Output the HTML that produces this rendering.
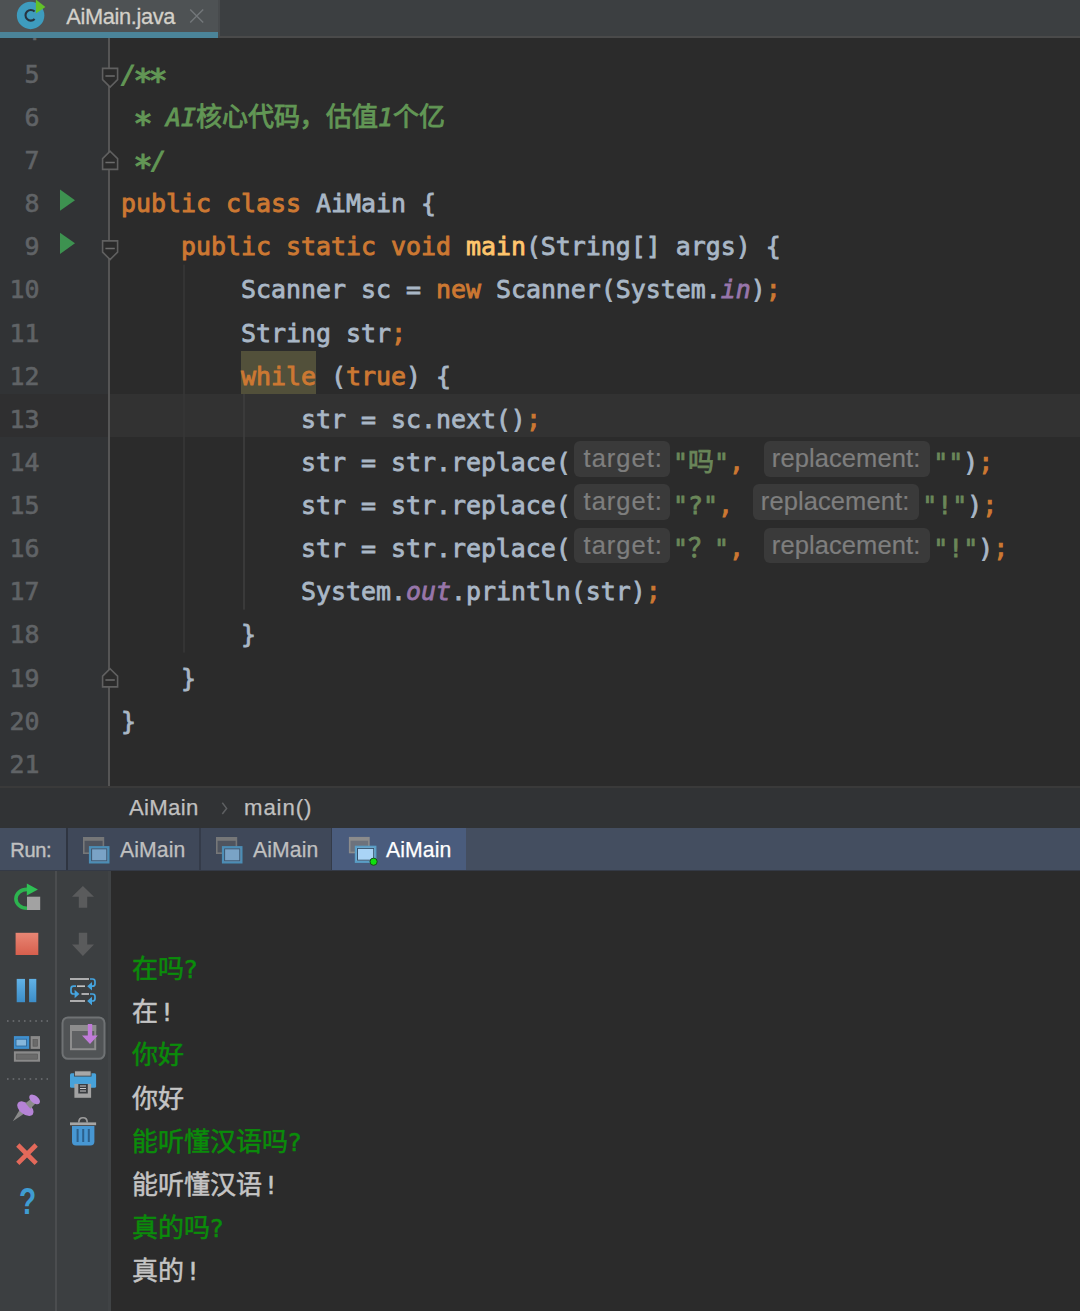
<!DOCTYPE html>
<html lang="zh">
<head>
<meta charset="utf-8">
<title>AiMain.java</title>
<style>
*{box-sizing:border-box;margin:0;padding:0}
html,body{width:1080px;height:1311px;overflow:hidden;background:#2b2b2b}
body{position:relative;font-family:"Liberation Sans","Noto Sans CJK SC",sans-serif;color:#bbbbbb}
.abs{position:absolute}
svg{position:absolute;overflow:visible}
/* tab bar */
#tabbar{left:0;top:0;width:1080px;height:38px;background:#3c3f41;border-bottom:2px solid #4a4a4a}
#tab{left:0;top:0;width:218px;height:38px;background:#4e5254;border-bottom:6px solid #4b8499}
#tabsep{left:218px;top:0;width:2px;height:36px;background:#484b4d}
#tabtitle{left:66.3px;top:2.5px;font-size:21.8px;letter-spacing:-.35px;line-height:28px;color:#d3d0c9;white-space:nowrap;-webkit-text-stroke:.3px}
/* editor */
#gutter{left:0;top:38px;width:109px;height:748px;background:#313335}
#gline{left:108px;top:38px;width:2px;height:748px;background:#555555}
#curline{left:110px;top:394px;width:970px;height:43px;background:#323232}
#curgut{left:0;top:394px;width:108.5px;height:43px;background:#2f2f30}
.ln{position:absolute;left:0;width:39.5px;text-align:right;height:43.125px;line-height:43.125px;
 font-family:"DejaVu Sans Mono","Liberation Mono",monospace;font-size:24.915px;color:#606366;white-space:pre;-webkit-text-stroke:.6px}
.cl{position:absolute;left:121px;height:43.125px;line-height:43.125px;white-space:pre;
 font-family:"DejaVu Sans Mono","Noto Sans CJK SC","Liberation Mono",monospace;font-size:24.915px;color:#a9b7c6;-webkit-text-stroke:.8px}
.k{color:#cc7832;-webkit-text-stroke:.9px}.d{color:#629755;font-style:italic;-webkit-text-stroke:.9px}
.ast{display:inline-block;width:15px;font-style:normal;transform:translate(-.5px,5.2px) scale(1.3);transform-origin:50% 50%}.s{color:#6a8759}.m{color:#ffc66d}.f{color:#9876aa;font-style:italic}
.cj{font-family:"Noto Sans CJK SC",sans-serif;font-style:normal;font-size:26px;line-height:0}

.h{display:inline-block;vertical-align:top;height:35.5px;margin-top:.4px;line-height:35.5px;border-radius:6px;background:#3a3a3a;color:#7e7e7e;
 font-family:"Liberation Sans",sans-serif;font-size:25.5px;-webkit-text-stroke:.2px;text-align:left;overflow:hidden}
.h1{width:96.1px;margin-left:3.4px;margin-right:2.7px;padding-left:9.3px;letter-spacing:1px}
.h2{width:165.6px;margin-left:5.2px;margin-right:3.5px;padding-left:7.6px;letter-spacing:.09px}
.guide{position:absolute;width:1.5px;background:#393939}
/* breadcrumbs */
#crumbs{left:0;top:786px;width:1080px;height:42px;background:#313335;border-top:2px solid #3a3a3a}
.cr{position:absolute;top:793.4px;font-size:22.2px;letter-spacing:.55px;line-height:30px;color:#c0c0c0;white-space:nowrap;-webkit-text-stroke:.25px}
/* run bar */
#runbar{left:0;top:828px;width:1080px;height:43px;background:#444e60;border-bottom:1px solid #343a46}
.rt{position:absolute;top:828px;height:42px}
.rtxt{position:absolute;top:835.4px;font-size:21.2px;letter-spacing:.1px;line-height:30px;color:#c0c0c0;white-space:nowrap;-webkit-text-stroke:.25px}
/* console */
#tb1{left:0;top:871px;width:55px;height:440px;background:#3c3f41}
#tbsep{left:55px;top:871px;width:2px;height:440px;background:#4b4d4f}
#tb2{left:57px;top:871px;width:53px;height:440px;background:#3c3f41}
.co{position:absolute;left:132px;-webkit-text-stroke:.5px;height:43.125px;line-height:43.125px;white-space:pre;
 font-family:"DejaVu Sans Mono","Noto Sans CJK SC",monospace;font-size:24.915px;color:#c4c4c4}
.co .cj{font-size:26px}
.in{color:#0a8c0a}
.ex{position:relative;left:1.5px}
.qu{position:relative;left:-1px}
.cm{position:relative;left:-.5px}
</style>
</head>
<body>
<div id="tabbar" class="abs"></div>
<div id="tab" class="abs"></div>
<div id="tabsep" class="abs"></div>
<div id="tabtitle" class="abs">AiMain.java</div>
<div id="gutter" class="abs"></div>
<div id="curline" class="abs"></div>
<div id="curgut" class="abs"></div>
<div id="gline" class="abs"></div>
<div class="abs" style="left:241px;top:351px;width:75px;height:43px;background:#52503a"></div>
<div class="abs" style="left:0;top:38px;width:100px;height:10px;overflow:hidden"><div class="ln" style="top:-28.375px">4</div></div>
<div class="ln" style="top:52.750px">5</div>
<div class="ln" style="top:95.875px">6</div>
<div class="ln" style="top:139.000px">7</div>
<div class="ln" style="top:182.125px">8</div>
<div class="ln" style="top:225.250px">9</div>
<div class="ln" style="top:268.375px">10</div>
<div class="ln" style="top:311.500px">11</div>
<div class="ln" style="top:354.625px">12</div>
<div class="ln" style="top:397.750px">13</div>
<div class="ln" style="top:440.875px">14</div>
<div class="ln" style="top:484.000px">15</div>
<div class="ln" style="top:527.125px">16</div>
<div class="ln" style="top:570.250px">17</div>
<div class="ln" style="top:613.375px">18</div>
<div class="ln" style="top:656.500px">19</div>
<div class="ln" style="top:699.625px">20</div>
<div class="ln" style="top:742.750px">21</div>
<div class="cl" style="top:52.750px"><span class="d">/<span class="ast">*</span><span class="ast">*</span></span></div>
<div class="cl" style="top:95.875px"><span class="d"> <span class="ast">*</span> AI<span class="cj">核心代码<span class="cm">，</span>估值</span>1<span class="cj">个亿</span></span></div>
<div class="cl" style="top:139.000px"><span class="d"> <span class="ast">*</span>/</span></div>
<div class="cl" style="top:182.125px"><span class="k">public class </span>AiMain {</div>
<div class="cl" style="top:225.250px">    <span class="k">public static void </span><span class="m">main</span>(String[] args) {</div>
<div class="cl" style="top:268.375px">        Scanner sc = <span class="k">new </span>Scanner(System.<span class="f">in</span>)<span class="k">;</span></div>
<div class="cl" style="top:311.500px">        String str<span class="k">;</span></div>
<div class="cl" style="top:354.625px">        <span class="k wh">while</span> (<span class="k">true</span>) {</div>
<div class="cl" style="top:397.750px">            str = sc.next()<span class="k">;</span></div>
<div class="cl" style="top:440.875px">            str = str.replace(<span class="h h1">target:</span><span class="s g1">"<span class="cj">吗</span>"</span><span class="k">,</span> <span class="h h2">replacement:</span><span class="s g1">""</span>)<span class="k">;</span></div>
<div class="cl" style="top:484.000px">            str = str.replace(<span class="h h1">target:</span><span class="s g1">"?"</span><span class="k">,</span> <span class="h h2">replacement:</span><span class="s g1">"!"</span>)<span class="k">;</span></div>
<div class="cl" style="top:527.125px">            str = str.replace(<span class="h h1">target:</span><span class="s g1">"<span class="cj">？</span>"</span><span class="k">,</span> <span class="h h2">replacement:</span><span class="s g1">"!"</span>)<span class="k">;</span></div>
<div class="cl" style="top:570.250px">            System.<span class="f">out</span>.println(str)<span class="k">;</span></div>
<div class="cl" style="top:613.375px">        }</div>
<div class="cl" style="top:656.500px">    }</div>
<div class="cl" style="top:699.625px">}</div>
<svg id="edsvg" width="1080" height="790" viewBox="0 0 1080 790" style="left:0;top:0">
  <!-- class icon in tab -->
  <circle cx="30.6" cy="15.4" r="13.75" fill="#3e9cbe"/>
  <path d="M34.6 11.6 A5.3 5.3 0 1 0 34.6 19" fill="none" stroke="#273440" stroke-width="2.1"/>
  <path d="M35.9 -0.5 L45.4 6.9 L35.9 13.6 Z" fill="#62c12a"/>
  <!-- tab close -->
  <path d="M190.2 9.6 L203.2 22.6 M203.2 9.6 L190.2 22.6" stroke="#73777a" stroke-width="1.4" fill="none"/>
  <!-- indent guides -->
  <rect x="183.2" y="264.6" width="1.6" height="388" fill="#373737"/>
  <rect x="243.2" y="394" width="1.6" height="215.6" fill="#3f3f3f"/>
  <!-- run gutter arrows -->
  <path d="M60 189.6 L75 200.2 L60 210.8 Z" fill="#3d9250"/>
  <path d="M60 232.7 L75 243.3 L60 253.9 Z" fill="#3d9250"/>
  <!-- fold markers -->
  <g fill="#2b2b2b" stroke="#606060" stroke-width="1.6" stroke-linejoin="miter">
    <path d="M102.6 68.4 H117.6 V79.6 L110.1 87.1 L102.6 79.6 Z"/>
    <path d="M102.6 240.9 H117.6 V252.1 L110.1 259.6 L102.6 252.1 Z"/>
    <path d="M110.1 151.2 L117.6 158.7 V169.4 H102.6 V158.7 Z"/>
    <path d="M110.1 668.7 L117.6 676.2 V686.9 H102.6 V676.2 Z"/>
  </g>
  <g stroke="#6c6c6c" stroke-width="1.5">
    <path d="M105.4 76 H114.8"/>
    <path d="M105.4 248.5 H114.8"/>
    <path d="M105.4 162.5 H114.8"/>
    <path d="M105.4 680 H114.8"/>
  </g>
</svg>
<div id="crumbs" class="abs"></div>
<div class="cr" style="left:129px;letter-spacing:.3px">AiMain</div>
<div class="cr" style="left:244px;letter-spacing:.9px">main()</div>
<div id="runbar" class="abs"></div>
<div class="rt" style="left:67px;width:132px;background:#3f4859"></div>
<div class="rt" style="left:201px;width:130px;background:#3f4859"></div>
<div class="rt" style="left:332px;width:134px;background:#4a5c7d"></div>
<div class="rt" style="left:66px;width:1.5px;background:#2f3541"></div>
<div class="rt" style="left:199px;width:2px;background:#343b49"></div>
<div class="rt" style="left:331px;width:1px;background:#343b49"></div>
<div class="rtxt" style="left:10.3px;font-size:20px;letter-spacing:-.35px;-webkit-text-stroke:.4px">Run:</div>
<div class="rtxt" style="left:120px">AiMain</div>
<div class="rtxt" style="left:253px">AiMain</div>
<div class="rtxt" style="left:386px;color:#ffffff">AiMain</div>
<div id="tb1" class="abs"></div>
<div id="tbsep" class="abs"></div>
<div id="tb2" class="abs"></div>
<div class="abs" style="left:108px;top:871px;width:3px;height:440px;background:#404345"></div>
<svg id="btsvg" width="1080" height="531" viewBox="0 780 1080 531" style="left:0;top:780px">
  <defs>
    <linearGradient id="gred" x1="0" y1="0" x2="0" y2="1"><stop offset="0" stop-color="#e88674"/><stop offset="1" stop-color="#d75f4d"/></linearGradient>
    <linearGradient id="gblue" x1="0" y1="0" x2="0" y2="1"><stop offset="0" stop-color="#62b2e6"/><stop offset="1" stop-color="#3c8dc8"/></linearGradient>
  </defs>
  <!-- breadcrumb chevron -->
  <path d="M222.3 802.8 L226.6 808.4 L222.3 814" fill="none" stroke="#5e6062" stroke-width="1.5"/>
  <!-- run tab icons (inactive) -->
  <g id="ric1">
    <rect x="83.8" y="837.8" width="19.6" height="15.4" fill="#4f545e" stroke="#767778" stroke-width="1.6"/>
    <rect x="83.8" y="837.8" width="19.6" height="3" fill="#767778"/>
    <rect x="89.9" y="847.1" width="18.6" height="15.4" fill="#7aa3c6" stroke="#4b8db5" stroke-width="2"/>
    <rect x="91.6" y="848.8" width="15.2" height="12" fill="none" stroke="#3b556e" stroke-width="1"/>
  </g>
  <g id="ric2" transform="translate(133 0)">
    <rect x="83.8" y="837.8" width="19.6" height="15.4" fill="#4f545e" stroke="#767778" stroke-width="1.6"/>
    <rect x="83.8" y="837.8" width="19.6" height="3" fill="#767778"/>
    <rect x="89.9" y="847.1" width="18.6" height="15.4" fill="#7aa3c6" stroke="#4b8db5" stroke-width="2"/>
    <rect x="91.6" y="848.8" width="15.2" height="12" fill="none" stroke="#3b556e" stroke-width="1"/>
  </g>
  <!-- active run tab icon -->
  <g id="ric3">
    <rect x="349.7" y="837.7" width="19.2" height="14.8" fill="#6d727c" stroke="#8c8c8c" stroke-width="1.6"/>
    <rect x="349.7" y="837.7" width="19.2" height="3" fill="#8c8c8c"/>
    <rect x="355.8" y="846.7" width="19.6" height="15.2" fill="#a9d4f6" stroke="#5a9ec6" stroke-width="2"/>
    <rect x="357.5" y="848.4" width="16.2" height="11.8" fill="none" stroke="#35506a" stroke-width="1"/>
    <circle cx="373.6" cy="861.7" r="3.6" fill="#0fe00f" stroke="#1d4a1d" stroke-width="1"/>
  </g>

  <!-- ===== left toolbar 1 ===== -->
  <!-- rerun -->
  <path d="M27 887.5 A12.9 11.25 0 1 0 27 910 L27 906.4 A9.3 7.6 0 1 1 27 891.2 Z" fill="#2db34f"/>
  <path d="M26.8 883.6 L37.9 889.5 L26.8 895.4 Z" fill="#2fc055"/>
  <rect x="27" y="896.7" width="13.2" height="13.3" fill="#a2a2a2"/>
  <!-- stop -->
  <rect x="15.6" y="932.8" width="22.7" height="22.2" fill="url(#gred)"/>
  <!-- pause -->
  <rect x="16.7" y="978.9" width="8.3" height="23.3" fill="url(#gblue)"/>
  <rect x="29.1" y="978.9" width="7.2" height="23.3" fill="url(#gblue)"/>
  <!-- dotted separators -->
  <path d="M7 1021 H48" stroke="#707376" stroke-width="1.6" stroke-dasharray="1.6 4.05"/>
  <path d="M7 1079 H48" stroke="#707376" stroke-width="1.6" stroke-dasharray="1.6 4.05"/>
  <!-- restore layout -->
  <rect x="13.9" y="1036.1" width="15.3" height="12.8" fill="#3f8fce"/>
  <rect x="16" y="1039.2" width="10.6" height="6.8" fill="#86b7dc" stroke="#2d6595" stroke-width=".8"/>
  <rect x="30.6" y="1036.1" width="9.4" height="12.8" fill="#8a8a8a"/>
  <rect x="33" y="1039.6" width="4.4" height="6.6" fill="#6a6a6a" stroke="#555" stroke-width=".6"/>
  <rect x="13.9" y="1051.3" width="26.1" height="10.4" fill="#8a8a8a"/>
  <rect x="16.2" y="1054" width="21.4" height="5.2" fill="#6a6a6a" stroke="#555" stroke-width=".6"/>
  <!-- pin -->
  <path d="M12.8 1121.2 L20.6 1108.2 L25.8 1112.6 Z" fill="#8a8a8a"/>
  <ellipse cx="25.4" cy="1108.6" rx="9.4" ry="5.6" transform="rotate(38 25.4 1108.6)" fill="#b583d6"/>
  <path d="M25.5 1103.2 L31.4 1098.6 L35.4 1103.6 L30.4 1108.8 Z" fill="#8c8c8c"/>
  <ellipse cx="34.6" cy="1099.4" rx="6.2" ry="3.7" transform="rotate(38 34.6 1099.4)" fill="#b887da"/>
  <!-- close X -->
  <path d="M17.8 1145 L36.2 1163.4 M36.2 1145 L17.8 1163.4" stroke="#e3695a" stroke-width="4.6" fill="none"/>
  <!-- ===== toolbar 2 ===== -->
  <!-- up / down arrows (disabled) -->
  <path d="M82.9 886 L94 896.8 H87.2 V907.8 H78.8 V896.8 H72 Z" fill="#5a5b5c"/>
  <path d="M82.9 956 L94 944.6 H87.2 V932.8 H78.8 V944.6 H72 Z" fill="#5a5b5c"/>
  <!-- soft wrap -->
  <g stroke="#c2c2c2" stroke-width="1.7" fill="none">
    <path d="M70 979 H89"/><path d="M77 986.2 H85"/><path d="M81.5 994 H89"/><path d="M70 1001 H85"/>
  </g>
  <g stroke="#45a5e0" stroke-width="1.7" fill="none">
    <path d="M90 979 H92.5 Q95 979 95 981.5 V983.7 Q95 986.2 92.5 986.2 H91"/>
    <path d="M76 986.2 H73.5 Q71 986.2 71 988.7 V991.5 Q71 994 73.5 994 H75"/>
    <path d="M90 994 H92.5 Q95 994 95 996.5 V998.5 Q95 1001 92.5 1001 H91"/>
  </g>
  <g fill="#45a5e0">
    <path d="M87.2 986.2 L92 982 V990.4 Z"/>
    <path d="M79.4 994 L74.6 989.8 V998.2 Z"/>
    <path d="M87.2 1001 L92 996.8 V1005.2 Z"/>
  </g>
  <!-- scroll to end (selected) -->
  <rect x="62.5" y="1017.4" width="42" height="41.4" rx="5.5" fill="#505355" stroke="#6f7274" stroke-width="2"/>
  <rect x="71" y="1026" width="24.2" height="23.2" fill="#5f6163" stroke="#8d8d8d" stroke-width="2"/>
  <rect x="70" y="1025" width="26.2" height="6" fill="#8d8d8d"/>
  <path d="M87.8 1023.9 H92.2 V1035.6 H97.8 L90 1044 L82 1035.6 H87.8 Z" fill="#c07bd9"/>
  <!-- print -->
  <rect x="70" y="1073.3" width="26.1" height="14.5" rx="1.5" fill="#47a2da"/>
  <rect x="74.4" y="1070.9" width="16.7" height="5.2" fill="#a8a8a8" stroke="#3a3d3f" stroke-width=".8"/>
  <rect x="74.4" y="1083.9" width="16.7" height="13.9" fill="#a2a2a2"/>
  <rect x="78.3" y="1084" width="9.5" height="9.5" fill="#3a3d40"/>
  <path d="M80 1086 H86 M80 1088.5 H86 M80 1091 H86" stroke="#c8c8c8" stroke-width="1"/>
  <!-- trash -->
  <path d="M78.8 1122.4 Q78.8 1117.8 83 1117.8 Q87.2 1117.8 87.2 1122.4" fill="none" stroke="#9c9c9c" stroke-width="1.6"/>
  <rect x="70" y="1122.4" width="26.1" height="2.8" fill="#a6a6a6"/>
  <path d="M72 1126 H94.4 V1141.6 Q94.4 1145.6 90.4 1145.6 H76 Q72 1145.6 72 1141.6 Z" fill="#4797d3"/>
  <path d="M77.6 1129 V1142 M83.2 1129 V1142 M88.8 1129 V1142" stroke="#2c608c" stroke-width="2"/>
</svg>
<div class="abs" style="left:14px;top:1182px;width:27px;height:40px;line-height:40px;text-align:center;font-family:'Liberation Sans',sans-serif;font-weight:bold;font-size:36px;color:#3f9cd2;transform:scaleX(.78)">?</div>
<div class="co in" style="top:948.2px"><span class="cj">在吗</span><span class="qu">?</span></div>
<div class="co" style="top:991.3px"><span class="cj">在</span><span class="ex">!</span></div>
<div class="co in" style="top:1034.4px"><span class="cj">你好</span></div>
<div class="co" style="top:1077.5px"><span class="cj">你好</span></div>
<div class="co in" style="top:1120.6px"><span class="cj">能听懂汉语吗</span><span class="qu">?</span></div>
<div class="co" style="top:1163.7px"><span class="cj">能听懂汉语</span><span class="ex">!</span></div>
<div class="co in" style="top:1206.8px"><span class="cj">真的吗</span><span class="qu">?</span></div>
<div class="co" style="top:1249.9px"><span class="cj">真的</span><span class="ex">!</span></div>
</body>
</html>
